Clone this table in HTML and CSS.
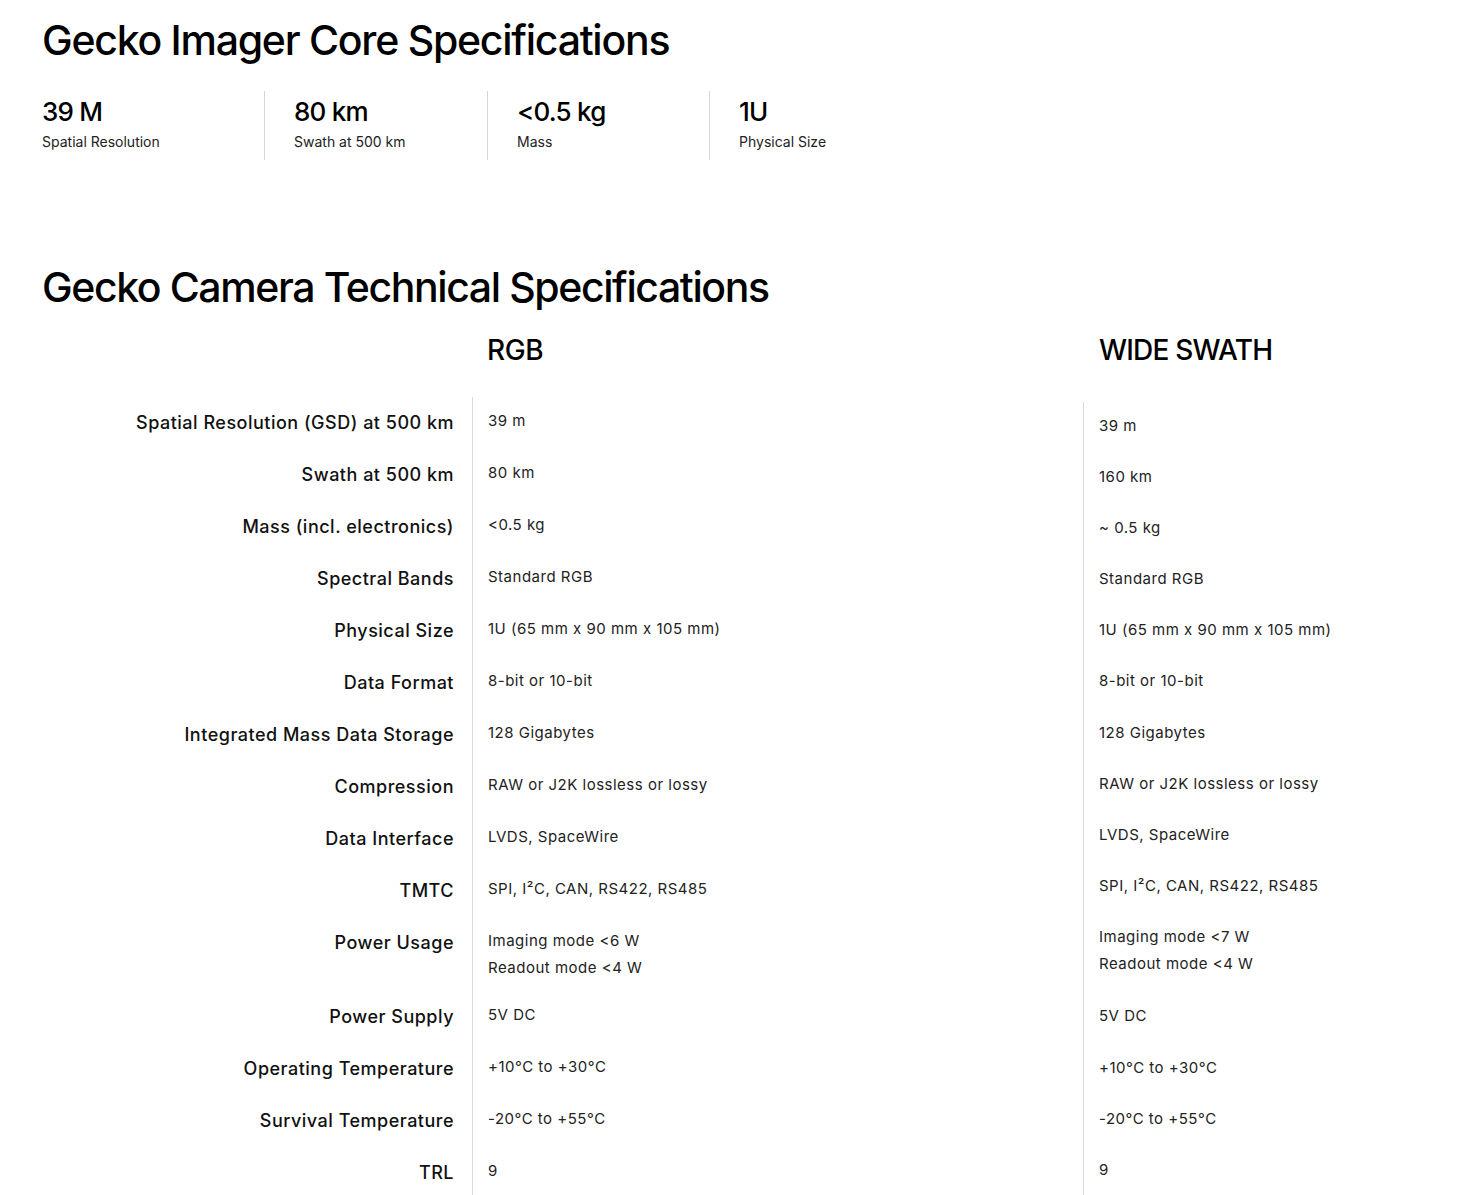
FILE: index.html
```html
<!DOCTYPE html>
<html lang="en">
<head>
<meta charset="utf-8">
<title>Gecko Specifications</title>
<link rel="stylesheet" href="styles.css">
</head>
<body>
<main class="page">
  <section class="core">
    <h1 class="title">Gecko Imager Core Specifications</h1>
    <div class="stats">
      <div class="stat"><div class="stat-value">39 M</div><div class="stat-label">Spatial Resolution</div></div>
      <div class="stat"><div class="stat-value">80 km</div><div class="stat-label">Swath at 500 km</div></div>
      <div class="stat"><div class="stat-value">&lt;0.5 kg</div><div class="stat-label">Mass</div></div>
      <div class="stat"><div class="stat-value">1U</div><div class="stat-label">Physical Size</div></div>
    </div>
  </section>

  <section class="tech">
    <h2 class="title title-2">Gecko Camera Technical Specifications</h2>
    <div class="spec-grid">
      <div class="col col-labels">
        <div class="col-head"></div>
        <div class="col-body">
          <div class="row">Spatial Resolution (GSD) at 500 km</div>
          <div class="row">Swath at 500 km</div>
          <div class="row">Mass (incl. electronics)</div>
          <div class="row">Spectral Bands</div>
          <div class="row">Physical Size</div>
          <div class="row">Data Format</div>
          <div class="row">Integrated Mass Data Storage</div>
          <div class="row">Compression</div>
          <div class="row">Data Interface</div>
          <div class="row">TMTC</div>
          <div class="row row-tall">Power Usage</div>
          <div class="row">Power Supply</div>
          <div class="row">Operating Temperature</div>
          <div class="row">Survival Temperature</div>
          <div class="row">TRL</div>
        </div>
      </div>

      <div class="col col-rgb">
        <div class="col-head">RGB</div>
        <div class="col-body">
          <div class="row">39 m</div>
          <div class="row">80 km</div>
          <div class="row">&lt;0.5 kg</div>
          <div class="row">Standard RGB</div>
          <div class="row">1U (65 mm x 90 mm x 105 mm)</div>
          <div class="row">8-bit or 10-bit</div>
          <div class="row">128 Gigabytes</div>
          <div class="row">RAW or J2K lossless or lossy</div>
          <div class="row">LVDS, SpaceWire</div>
          <div class="row">SPI, I²C, CAN, RS422, RS485</div>
          <div class="row row-tall">Imaging mode &lt;6 W<br>Readout mode &lt;4 W</div>
          <div class="row">5V DC</div>
          <div class="row">+10°C to +30°C</div>
          <div class="row">-20°C to +55°C</div>
          <div class="row">9</div>
        </div>
      </div>

      <div class="col col-wide">
        <div class="col-head">WIDE SWATH</div>
        <div class="col-body">
          <div class="row">39 m</div>
          <div class="row">160 km</div>
          <div class="row">~ 0.5 kg</div>
          <div class="row">Standard RGB</div>
          <div class="row">1U (65 mm x 90 mm x 105 mm)</div>
          <div class="row">8-bit or 10-bit</div>
          <div class="row">128 Gigabytes</div>
          <div class="row">RAW or J2K lossless or lossy</div>
          <div class="row">LVDS, SpaceWire</div>
          <div class="row">SPI, I²C, CAN, RS422, RS485</div>
          <div class="row row-tall">Imaging mode &lt;7 W<br>Readout mode &lt;4 W</div>
          <div class="row">5V DC</div>
          <div class="row">+10°C to +30°C</div>
          <div class="row">-20°C to +55°C</div>
          <div class="row">9</div>
        </div>
      </div>
    </div>
  </section>
</main>
</body>
</html>
```

FILE: styles.css
```css
* { box-sizing: border-box; }

html, body {
  margin: 0;
  padding: 0;
  background: #ffffff;
}

body {
  font-family: Inter, "Liberation Sans", sans-serif;
  color: #151515;
}

.page {
  padding: 16px 0 40px 42px;
}

.title {
  margin: 0;
  font-family: Inter, "Liberation Sans", sans-serif;
  font-size: 41px;
  font-weight: 500;
  line-height: 48px;
  letter-spacing: -1.25px;
  color: #000;
}

.title-2 {
  letter-spacing: -1.4px;
}

.stats {
  display: grid;
  grid-template-columns: 222px 223px 222px 222px;
  margin-top: 27px;
}

.stat {
  padding: 5px 0 8px 0;
}

.stat + .stat {
  border-left: 1px solid #d6d6d6;
  padding-left: 29px;
}

.stat-value {
  font-size: 26px;
  font-weight: 500;
  line-height: 32px;
  letter-spacing: -0.8px;
  color: #000;
}

.stat-label {
  margin-top: 4px;
  font-size: 14px;
  line-height: 20px;
  color: #222;
}

.tech {
  margin-top: 103px;
}

.spec-grid {
  display: grid;
  grid-template-columns: 430px 611px 1fr;
  margin-top: 22px;
}

.col {
  display: flex;
  flex-direction: column;
}

.col-head {
  height: 34px;
  font-size: 28px;
  font-weight: 500;
  line-height: 34px;
  letter-spacing: -0.4px;
  color: #000;
  padding-left: 15px;
}

.col-body {
  flex: 1;
  padding-top: 9.5px;
}

.col-labels .col-head,
.col-rgb .col-head {
  margin-bottom: 30px;
}

.col-wide .col-head {
  margin-bottom: 35px;
  padding-left: 16px;
  letter-spacing: -0.8px;
}

.col-labels .col-body {
  padding-top: 11.5px;
  padding-right: 18px;
  text-align: right;
}

.col-labels .row {
  height: 52px;
  font-size: 18px;
  font-weight: 500;
  line-height: 27px;
  letter-spacing: 0.5px;
  color: #111;
}

.col-labels .row-tall {
  height: 74px;
}

.col-rgb .col-body,
.col-wide .col-body {
  border-left: 1px solid #d9d9d9;
  padding-left: 15px;
}

.col-rgb .row,
.col-wide .row {
  font-size: 15px;
  line-height: 27px;
  letter-spacing: 0.5px;
  color: #222;
}

.col-rgb .row {
  height: 52px;
}

.col-rgb .row-tall {
  height: 74px;
}

.col-wide .row {
  height: 51.2px;
}

.col-wide .row-tall {
  height: 79px;
}
```
